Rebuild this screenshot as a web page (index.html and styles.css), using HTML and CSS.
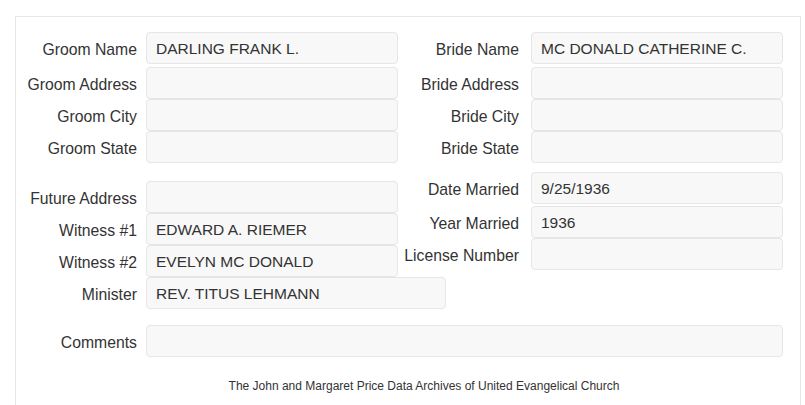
FILE: index.html
```html
<!DOCTYPE html>
<html>
<head>
<meta charset="utf-8">
<title>Marriage Record</title>
<link rel="stylesheet" href="styles.css">
</head>
<body>
<div class="panel">
  <div class="pair">
    <div class="col col-left">
      <div class="row gap3"><div class="lbl">Groom Name</div><div class="field">DARLING FRANK L.</div></div>
      <div class="row"><div class="lbl">Groom Address</div><div class="field"></div></div>
      <div class="row"><div class="lbl">Groom City</div><div class="field"></div></div>
      <div class="row"><div class="lbl">Groom State</div><div class="field"></div></div>
    </div>
    <div class="col col-right">
      <div class="row gap3"><div class="lbl">Bride Name</div><div class="field">MC DONALD CATHERINE C.</div></div>
      <div class="row"><div class="lbl">Bride Address</div><div class="field"></div></div>
      <div class="row"><div class="lbl">Bride City</div><div class="field"></div></div>
      <div class="row"><div class="lbl">Bride State</div><div class="field"></div></div>
    </div>
  </div>
  <div class="pair second">
    <div class="col col-left lower">
      <div class="row"><div class="lbl">Future Address</div><div class="field"></div></div>
      <div class="row"><div class="lbl">Witness #1</div><div class="field">EDWARD A. RIEMER</div></div>
      <div class="row"><div class="lbl">Witness #2</div><div class="field">EVELYN MC DONALD</div></div>
      <div class="row"><div class="lbl">Minister</div><div class="field wide">REV. TITUS LEHMANN</div></div>
    </div>
    <div class="col col-right">
      <div class="row gap2"><div class="lbl">Date Married</div><div class="field">9/25/1936</div></div>
      <div class="row"><div class="lbl">Year Married</div><div class="field">1936</div></div>
      <div class="row"><div class="lbl">License Number</div><div class="field"></div></div>
    </div>
  </div>
  <div class="row comments"><div class="lbl">Comments</div><div class="field full"></div></div>
  <div class="footer">The John and Margaret Price Data Archives of United Evangelical Church</div>
</div>
</body>
</html>
```
FILE: styles.css
```css
html, body {
  margin: 0;
  padding: 0;
  background: #ffffff;
}
body {
  font-family: "Liberation Sans", Arial, sans-serif;
  color: #333333;
  font-size: 15.75px;
}
.panel {
  margin: 16px 4px 0 15px;
  border: 1px solid #e6e6e6;
  border-bottom: none;
  padding: 15px 17px 0 0;
  height: 373px;
  overflow: hidden;
}
.pair {
  display: flex;
  align-items: flex-start;
}
.second {
  margin-top: 9px;
}
.col-left {
  width: 382px;
}
.col-right {
  width: 385px;
}
.lower {
  padding-top: 9px;
}
.row {
  display: flex;
  align-items: center;
  height: 32px;
}
.gap3 {
  margin-bottom: 3px;
}
.gap2 {
  margin-bottom: 2px;
}
.lbl {
  width: 121px;
  flex: none;
  text-align: right;
  white-space: nowrap;
  padding-top: 3px;
}
.col-left .lbl,
.comments .lbl {
  margin-right: 9px;
}
.col-right .lbl {
  margin-right: 12px;
}
.field {
  flex: none;
  width: 252px;
  height: 32px;
  box-sizing: border-box;
  border: 1px solid #e6e6e6;
  border-radius: 4px;
  background: #f8f8f8;
  padding: 1px 9px 0;
  line-height: 30px;
  font-size: 15.5px;
  color: #333333;
  white-space: nowrap;
  overflow: hidden;
}
.wide {
  width: 300px;
}
.comments {
  margin-top: 16px;
}
.full {
  width: 637px;
}
.footer {
  margin-top: 21px;
  padding-left: 49px;
  text-align: center;
  font-size: 12px;
  line-height: 16px;
  color: #333333;
}
```
